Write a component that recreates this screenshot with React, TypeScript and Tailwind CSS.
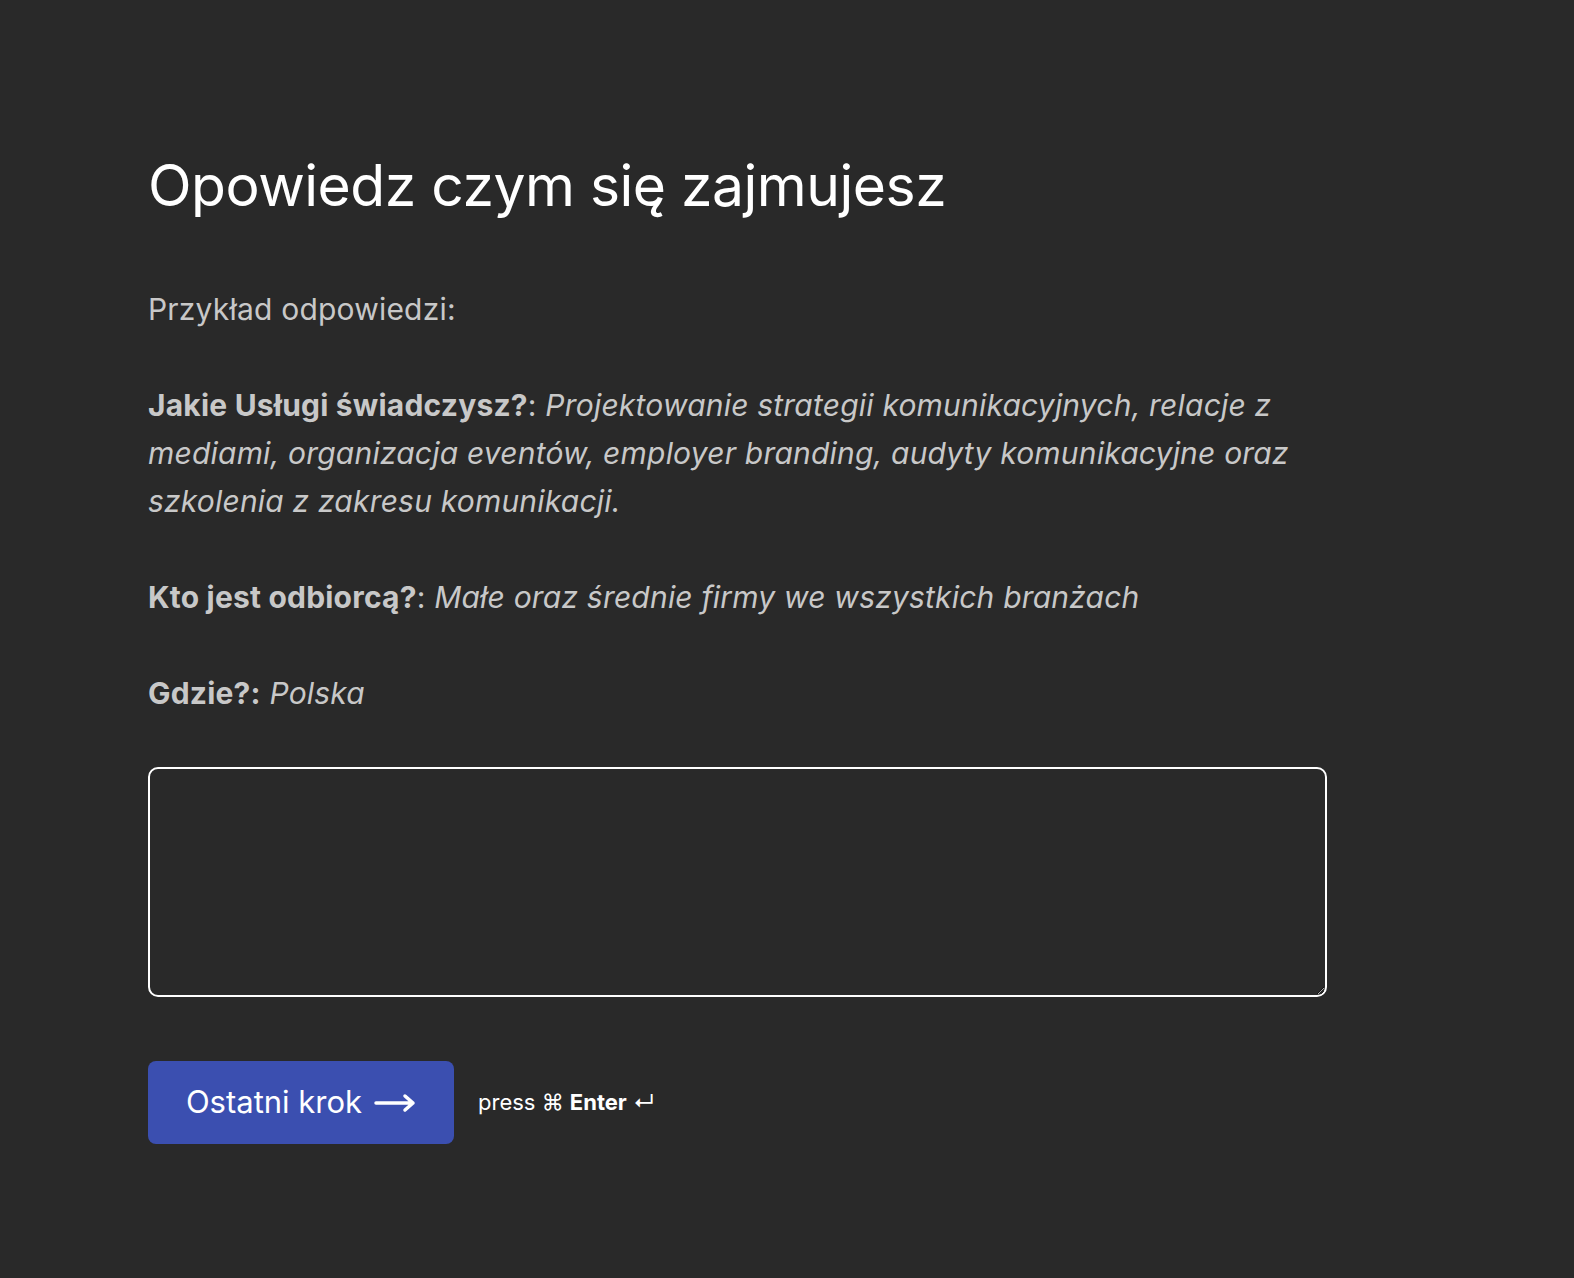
export default function App() {
  return (
    <div className="min-h-[1278px] bg-[#292929] font-[Inter] text-white">
      <div className="w-[1180px] pl-[148px] pt-[151px] box-content">
        <h1 className="text-[57px] leading-[70px] font-normal tracking-[-0.5px] text-white">
          Opowiedz czym się zajmujesz
        </h1>
        <div className="mt-[64px] text-[30px] leading-[48px] text-[#c8c8c8] tracking-[0.2px]">
          <p>Przykład odpowiedzi:</p>
          <p className="mt-[48px]">
            <b className="font-bold">Jakie Usługi świadczysz?</b>:{" "}
            <i>
              Projektowanie strategii komunikacyjnych, relacje z mediami, organizacja eventów, employer branding, audyty
              komunikacyjne oraz szkolenia z zakresu komunikacji.
            </i>
          </p>
          <p className="mt-[48px]">
            <b className="font-bold">Kto jest odbiorcą?</b>: <i>Małe oraz średnie firmy we wszystkich branżach</i>
          </p>
          <p className="mt-[48px]">
            <b className="font-bold">Gdzie?:</b> <i>Polska</i>
          </p>
        </div>
        <textarea
          autoFocus
          className="mt-[50px] block h-[230px] w-[1179px] rounded-[10px] border-2 border-white bg-transparent px-6 py-4 text-[30px] text-white outline-none"
        />
        <div className="mt-[64px] flex items-center gap-6">
          <button className="flex h-[83px] w-[306px] items-center justify-center gap-3 rounded-[8px] bg-[#3b4fb0] text-[31px] text-white">
            Ostatni krok
            <svg width="42" height="20" viewBox="0 0 42 20" fill="none" stroke="white" strokeWidth="3.5" strokeLinecap="round" strokeLinejoin="round">
              <path d="M2 10h37M31 3l8 7-8 7" />
            </svg>
          </button>
          <span className="text-[22px] text-white">
            press ⌘ <b className="font-bold">Enter</b> ↵
          </span>
        </div>
      </div>
    </div>
  );
}
